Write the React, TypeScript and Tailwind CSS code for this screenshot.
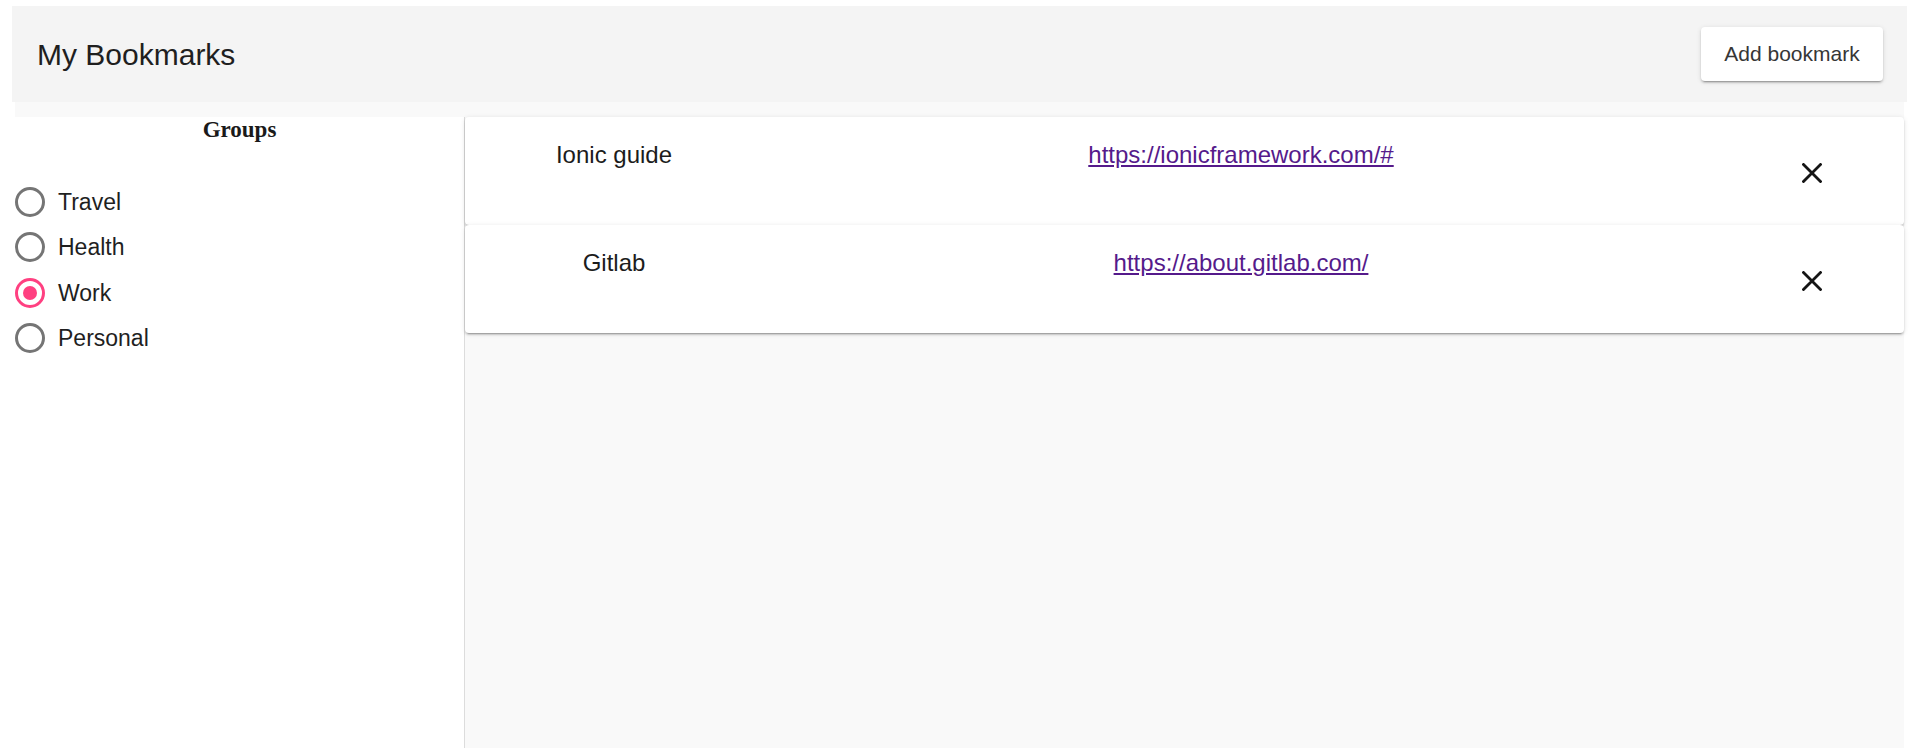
import React from "react"

const groups = [
  { name: "Travel", checked: false },
  { name: "Health", checked: false },
  { name: "Work", checked: true },
  { name: "Personal", checked: false },
]

const bookmarks = [
  { title: "Ionic guide", url: "https://ionicframework.com/#" },
  { title: "Gitlab", url: "https://about.gitlab.com/" },
]

const md =
  "shadow-[0_3px_1px_-2px_rgba(0,0,0,0.2),0_2px_2px_0_rgba(0,0,0,0.14),0_1px_5px_0_rgba(0,0,0,0.12)]"

function Radio({ checked }: { checked: boolean }) {
  return (
    <span
      className={
        checked
          ? "flex h-[30px] w-[30px] items-center justify-center rounded-full border-[3px] border-[#ff4081]"
          : "flex h-[30px] w-[30px] items-center justify-center rounded-full border-[3px] border-[#757575]"
      }
    >
      {checked && <span className="h-[14px] w-[14px] rounded-full bg-[#ff4081]" />}
    </span>
  )
}

function CloseIcon() {
  return (
    <svg width="20" height="20" viewBox="0 0 20 20" fill="none">
      <path d="M1.5 1.5L18.5 18.5M18.5 1.5L1.5 18.5" stroke="#151515" strokeWidth="2.8" strokeLinecap="square" />
    </svg>
  )
}

function BookmarkCard({ title, url }: { title: string; url: string }) {
  return (
    <div className={`relative grid h-[108px] grid-cols-[298px_956px_1fr] rounded-[4px] bg-white ${md}`}>
      <div className="pt-[20px] text-center text-[24px] text-[#1c1c1c]">{title}</div>
      <div className="pt-[20px] text-center text-[24px]">
        <a href={url} className="text-[#551a8b] underline">
          {url}
        </a>
      </div>
      <div className="flex justify-center pt-[46px]">
        <CloseIcon />
      </div>
    </div>
  )
}

export default function App() {
  return (
    <div className="flex h-screen flex-col bg-white pt-[6px] font-['Liberation_Sans',Arial,sans-serif]">
      <header className="ml-[12px] mr-[7px] flex h-[96px] shrink-0 items-center justify-between bg-[#f4f4f4] pl-[25px] pr-[24px]">
        <h1 className="text-[30px] text-[#1f1f1f]">My Bookmarks</h1>
        <button className={`h-[54px] w-[182px] rounded-[4px] bg-white text-[21px] text-[#363636] ${md}`}>
          Add bookmark
        </button>
      </header>

      <div className="ml-[15px] mr-[10px] flex min-h-0 flex-1 flex-col">
        <div className="h-[15px] shrink-0 bg-[#f9f9f9]" />
        <div className="flex min-h-0 flex-1">
          <aside className="w-[450px] shrink-0 border-r-[1.5px] border-[#dcdcdc] bg-white">
            <h2 className="text-center font-['Liberation_Serif',serif] text-[23px] font-bold leading-[26px] text-[#1a1a1a]">
              Groups
            </h2>
            <ul className="mt-[36px]">
              {groups.map((g) => (
                <li key={g.name} className="flex h-[45.5px] items-center gap-[13px]">
                  <Radio checked={g.checked} />
                  <span className="text-[23px] text-[#1f1f1f]">{g.name}</span>
                </li>
              ))}
            </ul>
          </aside>
          <main className="flex-1 bg-[#f9f9f9]">
            {bookmarks.map((b) => (
              <BookmarkCard key={b.title} title={b.title} url={b.url} />
            ))}
          </main>
        </div>
      </div>
    </div>
  )
}
